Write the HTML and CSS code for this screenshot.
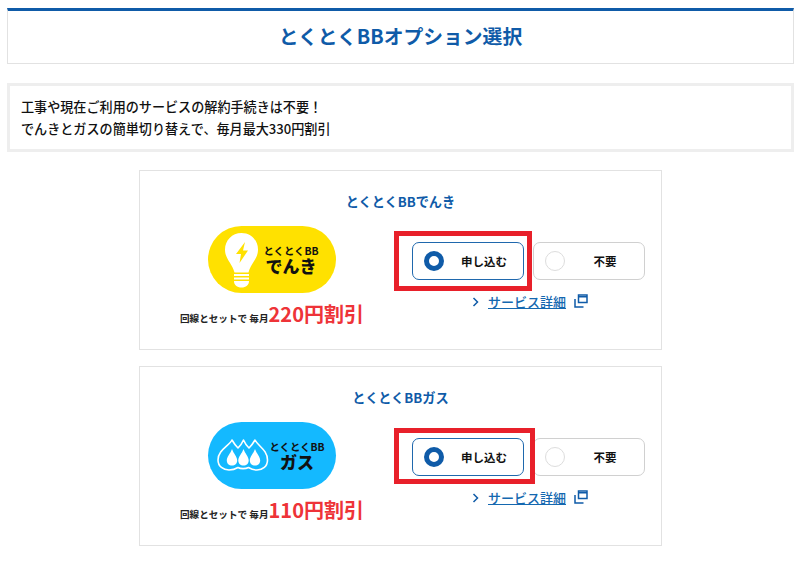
FILE: index.html
```html
<!DOCTYPE html>
<html lang="ja">
<head>
<meta charset="utf-8">
<title>とくとくBBオプション選択</title>
<link rel="stylesheet" href="styles.css">
</head>
<body>
<main class="page">
  <h1 class="title">とくとくBBオプション選択</h1>
  <p class="notice">工事や現在ご利用のサービスの解約手続きは不要！<br>でんきとガスの簡単切り替えで、毎月最大330円割引</p>

  <section class="card">
    <h2 class="card-title">とくとくBBでんき</h2>
    <div class="card-body">
      <div class="offer">
        <div class="logo logo-denki">
          <svg class="logo-icon" width="56" height="67" viewBox="-8.500 0 56 67">
            <path fill="#fff" d="M25 7C15.500 7 8.500 14.500 8.500 23.500C8.500 33 15.500 37 18 46.500H32C34.500 37 41.500 33 41.500 23.500C41.500 14.500 34.500 7 25 7Z"/>
            <path fill="#ffe100" d="M28.500 16L19.500 28H24.500L23 37L31.500 24.500H26.500Z"/>
            <path fill="#fff" d="M17.500 48H32.500V50H17.500ZM17.500 51.500H32.500V53.500H17.500ZM17.500 55H32.500C32.500 59 29.500 61.500 25 61.500C20.500 61.500 17.500 59 17.500 55Z"/>
          </svg>
          <div class="logo-text">
            <span class="logo-brand">とくとくBB</span>
            <span class="logo-name">でんき</span>
          </div>
        </div>
        <p class="price"><span class="price-label">回線とセットで 毎月</span><span class="price-value">220円割引</span></p>
      </div>
      <div class="choice">
        <div class="options">
          <div class="option option-on"><span class="radio radio-on"></span><span class="option-text">申し込む</span></div>
          <div class="option"><span class="radio"></span><span class="option-text">不要</span></div>
        </div>
        <div class="detail">
          <svg class="chevron" width="7" height="10" viewBox="0 0 7 10"><path d="M1.500 1L5.500 5L1.500 9" fill="none" stroke="#0f5ba8" stroke-width="1.500"/></svg>
          <a class="detail-link" href="#">サービス詳細</a>
          <svg class="external" width="14" height="14" viewBox="0 0 14 14"><path d="M4.500 1H13V8.500H4.500Z M4.500 2.800H13" fill="none" stroke="#0f5ba8" stroke-width="1.500"/><path d="M1 5V13H9.500" fill="none" stroke="#0f5ba8" stroke-width="1.500"/></svg>
        </div>
        <div class="highlight highlight-first"></div>
      </div>
    </div>
  </section>

  <section class="card">
    <h2 class="card-title">とくとくBBガス</h2>
    <div class="card-body">
      <div class="offer">
        <div class="logo logo-gas">
          <svg class="logo-icon" width="62" height="67" viewBox="0 0 62 67">
            <path fill="none" stroke="#fff" stroke-width="1.600" stroke-linejoin="round" d="M24 18C21 24 10 28 10 38C10 44.500 15.500 48 21 48C24.500 48 27.500 47 30 45.500C32.500 47 37.500 47 40.500 45.500C43 47 45.500 48 49 48C54.500 48 59.500 44.500 59.500 38C59.500 28 50 24 47 18C45 21.500 43 24 41 26C39 24 37 21.500 35.500 18C34 21.500 32 24 30 26C28 24 26 21.500 24 18Z"/>
            <path fill="#fff" d="M24 27C22.500 31.500 18.800 34.500 18.800 38.500C18.800 41.500 21 43.500 24 43.500C27 43.500 29.200 41.500 29.200 38.500C29.200 34.500 25.500 31.500 24 27Z"/>
            <path fill="#fff" d="M35.500 27C34 31.500 30.300 34.500 30.300 38.500C30.300 41.500 32.500 43.500 35.500 43.500C38.500 43.500 40.700 41.500 40.700 38.500C40.700 34.500 37 31.500 35.500 27Z"/>
            <path fill="#fff" d="M47 27C45.500 31.500 41.800 34.500 41.800 38.500C41.800 41.500 44 43.500 47 43.500C50 43.500 52.200 41.500 52.200 38.500C52.200 34.500 48.500 31.500 47 27Z"/>
          </svg>
          <div class="logo-text">
            <span class="logo-brand">とくとくBB</span>
            <span class="logo-name">ガス</span>
          </div>
        </div>
        <p class="price"><span class="price-label">回線とセットで 毎月</span><span class="price-value">110円割引</span></p>
      </div>
      <div class="choice">
        <div class="options">
          <div class="option option-on"><span class="radio radio-on"></span><span class="option-text">申し込む</span></div>
          <div class="option"><span class="radio"></span><span class="option-text">不要</span></div>
        </div>
        <div class="detail">
          <svg class="chevron" width="7" height="10" viewBox="0 0 7 10"><path d="M1.500 1L5.500 5L1.500 9" fill="none" stroke="#0f5ba8" stroke-width="1.500"/></svg>
          <a class="detail-link" href="#">サービス詳細</a>
          <svg class="external" width="14" height="14" viewBox="0 0 14 14"><path d="M4.500 1H13V8.500H4.500Z M4.500 2.800H13" fill="none" stroke="#0f5ba8" stroke-width="1.500"/><path d="M1 5V13H9.500" fill="none" stroke="#0f5ba8" stroke-width="1.500"/></svg>
        </div>
        <div class="highlight highlight-second"></div>
      </div>
    </div>
  </section>
</main>
</body>
</html>
```

FILE: styles.css
```css
* { box-sizing: border-box; }

html, body { margin: 0; padding: 0; background: #fff; }

body {
  font-family: "Noto Sans CJK JP", "Noto Sans", sans-serif;
  color: #111;
  overflow: hidden;
}

.page {
  width: 787px;
  margin-left: 7px;
  padding-top: 8px;
}

.title {
  margin: 0;
  height: 56px;
  border: 1px solid #e2e2e2;
  border-top: 3px solid #0f5ba8;
  color: #0f5ba8;
  font-size: 19.800px;
  font-weight: 700;
  line-height: 50px;
  text-align: center;
}

.notice {
  margin: 19px 0 18px;
  height: 69px;
  border: 3px solid #eee;
  padding: 10px 11px;
  font-size: 13.100px;
  font-weight: 500;
  line-height: 22px;
}

.card {
  width: 523px;
  height: 180px;
  margin: 0 auto 16px;
  border: 1px solid #e2e2e2;
  padding-top: 22px;
}

.card-title {
  margin: 0;
  color: #0f5ba8;
  font-size: 13.200px;
  font-weight: 700;
  line-height: 18px;
  text-align: center;
}

.card-body {
  display: flex;
  margin-top: 15px;
  padding-left: 40px;
}

.offer {
  width: 232px;
  display: flex;
  flex-direction: column;
}

.logo {
  display: flex;
  width: 128px;
  height: 67px;
  margin-left: 28px;
  border-radius: 34px;
}

.logo-denki { background: #ffe100; }
.logo-gas { background: #14b9ff; }

.logo-icon { flex: none; }

.logo-text {
  display: flex;
  flex-direction: column;
  align-items: center;
  width: 54px;
  padding-top: 18px;
  color: #111;
}

.logo-brand {
  font-size: 10.400px;
  font-weight: 700;
  line-height: 14px;
  white-space: nowrap;
}

.logo-name {
  font-size: 17px;
  font-weight: 900;
  line-height: 15px;
  white-space: nowrap;
}

.price {
  display: flex;
  align-items: baseline;
  margin: 6px 0 0;
  line-height: 30px;
  white-space: nowrap;
}

.price-label {
  font-size: 9.600px;
  font-weight: 700;
  color: #222;
}

.price-value {
  font-size: 20px;
  font-weight: 700;
  color: #ee3338;
}

.choice {
  position: relative;
  width: 233px;
  padding-top: 16px;
}

.options {
  display: flex;
  gap: 9px;
}

.option {
  position: relative;
  display: flex;
  align-items: center;
  width: 112px;
  height: 38px;
  border: 1px solid #d0d0d0;
  border-radius: 7px;
  padding-left: 11px;
}

.option-on { border-color: #1f68ad; }

.radio {
  flex: none;
  width: 20px;
  height: 20px;
  border: 1px solid #ddd;
  border-radius: 50%;
}

.radio-on { border: 5.500px solid #0f5ba8; }

.option-text {
  flex: 1;
  padding-left: 1px;
  font-size: 11.500px;
  font-weight: 700;
  text-align: center;
  color: #111;
}

.detail {
  display: flex;
  align-items: center;
  height: 20px;
  margin-top: 12px;
  padding-left: 60px;
}

.chevron { flex: none; }

.detail-link {
  margin-left: 9px;
  color: #1468b0;
  font-size: 13px;
  font-weight: 500;
  line-height: 20px;
  text-decoration: underline;
}

.external { flex: none; margin-left: 8px; margin-top: -3px; }

.highlight {
  position: absolute;
  left: -18px;
  border: 5px solid #e8202a;
  pointer-events: none;
}

.highlight-first { top: 5px; width: 138px; height: 60px; }
.highlight-second { top: 6px; width: 141px; height: 56px; }
```
